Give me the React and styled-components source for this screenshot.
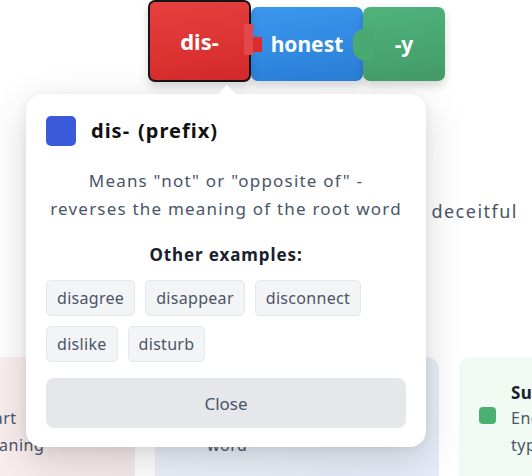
import styled, { createGlobalStyle } from 'styled-components';

const GlobalStyle = createGlobalStyle`
  html, body {
    margin: 0;
    padding: 0;
    background: #ffffff;
    font-family: "Noto Sans", "Open Sans", sans-serif;
    overflow: hidden;
  }
`;

const pieceColors = {
  red: 'linear-gradient(170deg, #e6403f 0%, #d5292a 100%)',
  blue: 'linear-gradient(170deg, #3b97ee 0%, #2a7ed6 100%)',
  green: 'linear-gradient(170deg, #4fb47b 0%, #439a67 100%)',
};

const cardColors = {
  red: 'linear-gradient(135deg, #fdf3f3 0%, #f6e9e9 100%)',
  blue: 'linear-gradient(135deg, #eef2fa 0%, #e5ecf8 100%)',
  green: 'linear-gradient(135deg, #f1fbf4 0%, #eef9f1 100%)',
};

const examples = ['disagree', 'disappear', 'disconnect', 'dislike', 'disturb'];

export default function App() {
  return (
    <>
      <GlobalStyle />
      <Page>
        <PieceRow>
          <Piece color="red" selected>
            dis-
            <TabBase />
            <TabNub />
          </Piece>
          <Piece color="blue">honest</Piece>
          <Piece color="green" narrow>
            <Knob />
            -y
          </Piece>
        </PieceRow>

        <WordRow>
          <Word>untruthful</Word>
          <Word>deceitful</Word>
        </WordRow>

        <CardsRow>
          <InfoCard tone="red">
            <CardIcon tone="red" />
            <CardText>
              <CardTitle>Prefix</CardTitle>
              <CardDesc>
                Added at start
                <br />
                changes meaning
              </CardDesc>
            </CardText>
          </InfoCard>
          <InfoCard tone="blue">
            <CardIcon tone="blue" />
            <CardText>
              <CardTitle>Root</CardTitle>
              <CardDesc>
                The main part of the
                <br />
                word
              </CardDesc>
            </CardText>
          </InfoCard>
          <InfoCard tone="green">
            <CardIcon tone="green" />
            <CardText>
              <CardTitle>Suffix</CardTitle>
              <CardDesc>
                Ends the word, sets its
                <br />
                type
              </CardDesc>
            </CardText>
          </InfoCard>
        </CardsRow>

        <Popover>
          <Header>
            <Swatch />
            <Title>
              dis-<Kind>(prefix)</Kind>
            </Title>
          </Header>
          <Description>
            Means "not" or "opposite of" -
            <br />
            reverses the meaning of the root word
          </Description>
          <SubHeading>Other examples:</SubHeading>
          <Chips>
            {examples.map(item => (
              <Chip key={item}>{item}</Chip>
            ))}
          </Chips>
          <CloseButton>Close</CloseButton>
        </Popover>
      </Page>
    </>
  );
}

const Page = styled.div`
  position: relative;
  width: 532px;
  height: 476px;
  overflow: hidden;
  background: #ffffff;
`;

const PieceRow = styled.div`
  display: flex;
  align-items: flex-start;
  padding-left: 148px;
`;

const Piece = styled.div`
  position: relative;
  box-sizing: border-box;
  display: flex;
  align-items: center;
  justify-content: center;
  width: ${p => (p.selected ? '103px' : p.narrow ? '82px' : '112px')};
  height: ${p => (p.selected ? '82px' : '74px')};
  margin-top: ${p => (p.selected ? '0' : '7px')};
  border: ${p => (p.selected ? '2px solid #151515' : 'none')};
  border-radius: 7px;
  background: ${p => pieceColors[p.color]};
  box-shadow: 0 5px 10px rgba(0, 0, 0, 0.16);
  color: #ffffff;
  font-size: ${p => (p.selected ? '22px' : '21px')};
  font-weight: 700;
  z-index: ${p => (p.selected ? 3 : 1)};
`;

const TabBase = styled.span`
  position: absolute;
  right: -4px;
  top: 22px;
  width: 9px;
  height: 31px;
  background: #e2474a;
`;

const TabNub = styled.span`
  position: absolute;
  right: -13px;
  top: 35px;
  width: 9px;
  height: 15px;
  background: #db2b2c;
`;

const Knob = styled.span`
  position: absolute;
  left: -10px;
  top: 22px;
  width: 20px;
  height: 31px;
  border-radius: 11px 0 0 11px;
  background: #4aa970;
`;

const WordRow = styled.div`
  display: flex;
  justify-content: flex-end;
  gap: 16px;
  padding-right: 14px;
  margin-top: 116px;
`;

const Word = styled.span`
  font-size: 18px;
  line-height: 26px;
  letter-spacing: 1.5px;
  color: #4a5568;
  white-space: nowrap;
`;

const CardsRow = styled.div`
  display: flex;
  gap: 20px;
  margin-left: -149px;
  margin-top: 133px;
`;

const InfoCard = styled.div`
  flex: 0 0 auto;
  box-sizing: border-box;
  display: flex;
  align-items: flex-start;
  gap: 15px;
  width: 284px;
  height: 140px;
  padding: 24px 20px 20px;
  border-radius: 12px;
  background: ${p => cardColors[p.tone]};
`;

const CardIcon = styled.span`
  flex: 0 0 auto;
  width: 17px;
  height: 17px;
  border-radius: 4px;
  margin-top: 26px;
  background: ${p => ({ red: '#e34b4b', blue: '#3b6fdc', green: '#4caf72' })[p.tone]};
`;

const CardText = styled.div`
  display: flex;
  flex-direction: column;
`;

const CardTitle = styled.div`
  font-size: 17px;
  line-height: 24px;
  font-weight: 700;
  letter-spacing: 0.5px;
  color: #1a202c;
  white-space: nowrap;
`;

const CardDesc = styled.div`
  font-size: 16px;
  line-height: 27px;
  letter-spacing: 0.5px;
  color: #4a5568;
  white-space: nowrap;
`;

const Popover = styled.div`
  position: absolute;
  left: 26px;
  top: 94px;
  width: 400px;
  box-sizing: border-box;
  padding: 22px 20px 19px;
  background: #ffffff;
  border-radius: 16px;
  box-shadow: 0 12px 40px rgba(0, 0, 0, 0.16), 0 2px 10px rgba(0, 0, 0, 0.06);
  z-index: 5;

  &::before {
    content: '';
    position: absolute;
    top: -9px;
    left: 191px;
    border-left: 10px solid transparent;
    border-right: 10px solid transparent;
    border-bottom: 10px solid #ffffff;
  }
`;

const Header = styled.div`
  display: flex;
  align-items: center;
  gap: 15px;
`;

const Swatch = styled.span`
  width: 30px;
  height: 30px;
  border-radius: 5px;
  background: #3a5bd9;
`;

const Title = styled.div`
  font-size: 20px;
  line-height: 30px;
  font-weight: 700;
  letter-spacing: 1px;
  color: #111111;
`;

const Kind = styled.span`
  margin-left: 8px;
`;

const Description = styled.p`
  margin: 21px 0 0;
  text-align: center;
  font-size: 17px;
  line-height: 28px;
  letter-spacing: 1.2px;
  color: #4a5568;
`;

const SubHeading = styled.div`
  margin-top: 20px;
  text-align: center;
  font-size: 17px;
  line-height: 24px;
  font-weight: 700;
  letter-spacing: 0.9px;
  color: #1a202c;
`;

const Chips = styled.div`
  display: flex;
  flex-wrap: wrap;
  gap: 10px;
  margin-top: 13px;
`;

const Chip = styled.span`
  padding: 6px 10px;
  font-size: 16px;
  line-height: 22px;
  letter-spacing: 0.3px;
  color: #4a5568;
  background: #f3f4f6;
  border: 1px solid #e5e7eb;
  border-radius: 5px;
`;

const CloseButton = styled.button`
  display: block;
  width: 100%;
  height: 50px;
  margin-top: 16px;
  border: none;
  border-radius: 8px;
  background: #e5e7eb;
  font-family: inherit;
  font-size: 17px;
  color: #4a5568;
  cursor: pointer;
`;
